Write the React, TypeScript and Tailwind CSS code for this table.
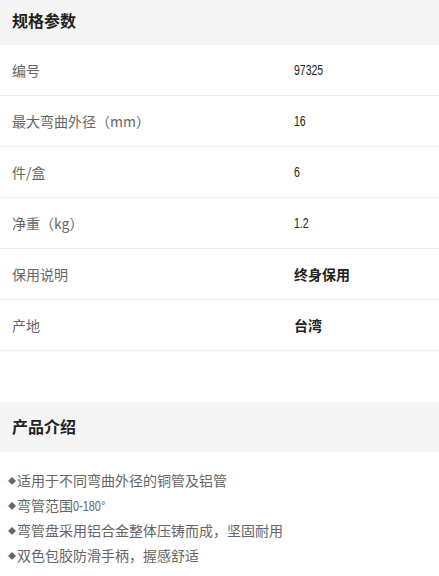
const specs: { label: string; value: string; bold?: boolean }[] = [
  { label: '编号', value: '97325' },
  { label: '最大弯曲外径（mm）', value: '16' },
  { label: '件/盒', value: '6' },
  { label: '净重（kg）', value: '1.2' },
  { label: '保用说明', value: '终身保用', bold: true },
  { label: '产地', value: '台湾', bold: true },
];

const features = [
  '适用于不同弯曲外径的铜管及铝管',
  '弯管范围0-180°',
  '弯管盘采用铝合金整体压铸而成，坚固耐用',
  '双色包胶防滑手柄，握感舒适',
];

const cjk = "font-['Noto_Sans_CJK_SC',sans-serif]";
const latin = "font-['Liberation_Sans',Arial,sans-serif]";

export default function App() {
  return (
    <div className={`w-[439px] bg-white ${cjk}`}>
      {/* 规格参数 */}
      <div className="h-[45px] bg-[#f5f5f5] flex items-center px-3 pb-[5px]">
        <h2 className="text-[16px] font-bold text-[#222]">规格参数</h2>
      </div>
      <div>
        {specs.map((s) => (
          <div key={s.label} className="h-[51px] border-b border-[#eeeeee] flex items-center">
            <span className="w-[294px] pl-3 text-[14px] text-[#666]">{s.label}</span>
            {s.bold ? (
              <span className="text-[14px] font-bold text-[#222]">{s.value}</span>
            ) : (
              <span className={`${latin} inline-block origin-left scale-x-[0.75] text-[14px] text-[#222]`}>{s.value}</span>
            )}
          </div>
        ))}
      </div>

      <div className="h-[51px]" />

      {/* 产品介绍 */}
      <div className="h-[50px] bg-[#f5f5f5] flex items-center px-3 pb-[3px]">
        <h2 className="text-[16px] font-bold text-[#222]">产品介绍</h2>
      </div>
      <ul className="pt-[16px] pl-[8px] flex flex-col">
        {features.map((f) => (
          <li key={f} className="h-[25px] flex items-center text-[14px] text-[#666]">
            <span className="text-[8px] text-[#666] mr-[1px]">◆</span>
            <span>
              {f.split(/(0-180°)/).map((p, i) =>
                p === '0-180°' ? (
                  <span key={i} className="inline-block w-[32px] whitespace-nowrap">
                    <span className={`${latin} inline-block origin-left scale-x-[0.78]`}>{p}</span>
                  </span>
                ) : (
                  <span key={i}>{p}</span>
                )
              )}
            </span>
          </li>
        ))}
      </ul>
    </div>
  );
}
